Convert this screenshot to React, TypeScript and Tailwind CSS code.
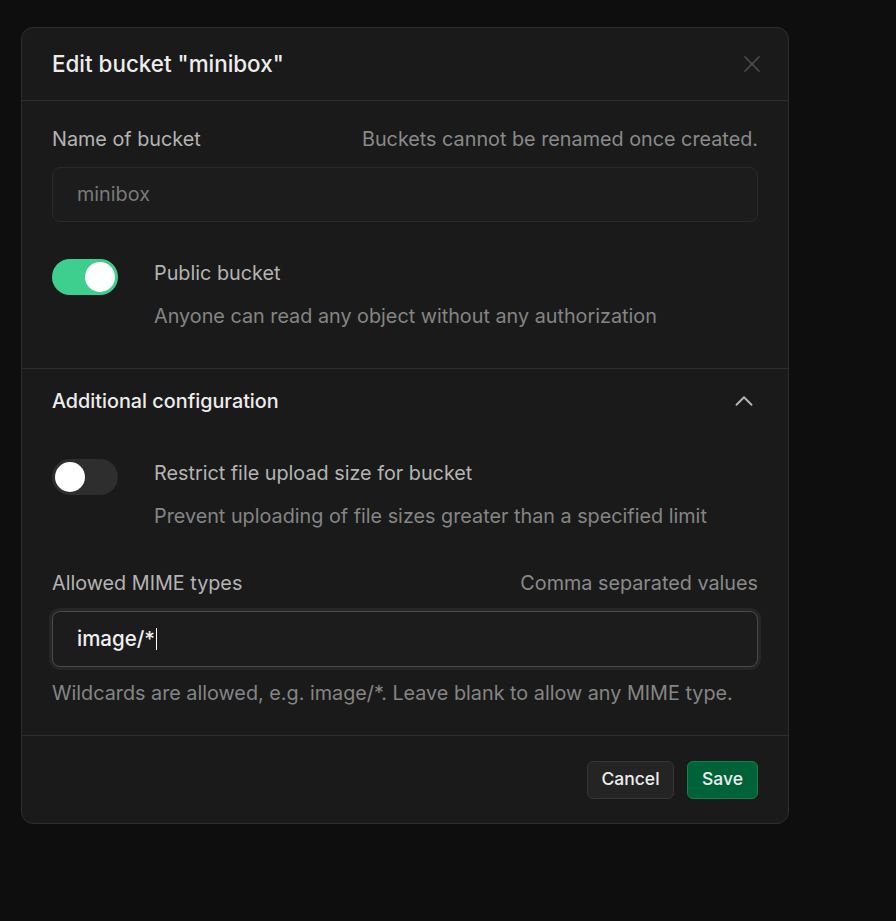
import { ChevronUp, X } from "lucide-react";

const font = { fontFamily: "Inter, 'Noto Sans', sans-serif" };

function Toggle({ on }: { on: boolean }) {
	return (
		<div
			className={`flex h-[36px] w-[66px] shrink-0 items-center rounded-full px-[3px] ${
				on ? "justify-end bg-[#3ecf8e]" : "justify-start bg-[#2e2e2e]"
			}`}
		>
			<div className="h-[30px] w-[30px] rounded-full bg-white" />
		</div>
	);
}

function ToggleRow({
	on,
	title,
	desc,
}: {
	on: boolean;
	title: string;
	desc: string;
}) {
	return (
		<div className="flex gap-[36px]">
			<Toggle on={on} />
			<div className="flex flex-col gap-[19px] pt-[2px]">
				<span className="text-[19.8px] leading-[24px] text-[#b4b4b4]">{title}</span>
				<span className="text-[19.8px] leading-[24px] text-[#858585]">{desc}</span>
			</div>
		</div>
	);
}

export default function App() {
	return (
		<div className="min-h-screen bg-[#0e0e0e] pl-[21px] pt-[27px]" style={font}>
			<div className="w-[768px] rounded-[12px] border border-[#2e2e2e] bg-[#1a1a1a]">
				{/* Header */}
				<div className="flex h-[73px] items-center justify-between border-b border-[#2e2e2e] pl-[30px] pr-[22px]">
					<h1 className="text-[22.4px] font-medium text-[#ededed]">Edit bucket "minibox"</h1>
					<X className="h-[28px] w-[28px] text-[#4d4d4d]" strokeWidth={1.5} />
				</div>

				{/* Name + public */}
				<div className="border-b border-[#2e2e2e] px-[30px] pb-[40px] pt-[26px]">
					<div className="flex items-center justify-between">
						<span className="text-[19.8px] leading-[24px] text-[#b4b4b4]">Name of bucket</span>
						<span className="text-[19.8px] leading-[24px] text-[#8a8a8a]">
							Buckets cannot be renamed once created.
						</span>
					</div>
					<div className="mt-[16px] flex h-[55px] items-center rounded-[8px] border border-[#2a2a2a] bg-[#1c1c1c] px-[24px] text-[19.8px] text-[#7a7a7a]">
						minibox
					</div>
					<div className="mt-[37px]">
						<ToggleRow
							on
							title="Public bucket"
							desc="Anyone can read any object without any authorization"
						/>
					</div>
				</div>

				{/* Additional configuration */}
				<div className="border-b border-[#2e2e2e] px-[30px] pb-[30px] pt-[20px]">
					<div className="flex h-[24px] items-center justify-between">
						<span className="text-[19.8px] font-medium leading-[24px] text-[#ededed]">
							Additional configuration
						</span>
						<ChevronUp className="-my-[3px] -mr-[1px] h-[30px] w-[30px] text-[#b4b4b4]" strokeWidth={1.5} />
					</div>
					<div className="mt-[46px]">
						<ToggleRow
							on={false}
							title="Restrict file upload size for bucket"
							desc="Prevent uploading of file sizes greater than a specified limit"
						/>
					</div>
					<div className="mt-[43px] flex items-center justify-between">
						<span className="text-[19.8px] leading-[24px] text-[#b4b4b4]">Allowed MIME types</span>
						<span className="text-[19.8px] leading-[24px] text-[#8a8a8a]">Comma separated values</span>
					</div>
					<div className="mt-[16px] flex h-[56px] items-center rounded-[8px] border border-[#4a4a4a] bg-[#1c1c1c] px-[24px] shadow-[0_0_0_3px_#262626]">
						<span className="text-[20.5px] font-medium text-[#f0f0f0]">image/*</span>
						<span className="ml-[1px] h-[22px] w-[1px] bg-white" />
					</div>
					<p className="mt-[14px] text-[19.8px] leading-[24px] text-[#858585]">
						Wildcards are allowed, e.g. image/*. Leave blank to allow any MIME type.
					</p>
				</div>

				{/* Footer */}
				<div className="flex h-[87px] items-center justify-end gap-[13px] px-[30px]">
					<button className="h-[38px] w-[87px] rounded-[6px] border border-[#363636] bg-[#242424] text-[17.5px] font-medium text-[#ededed]">
						Cancel
					</button>
					<button className="h-[38px] w-[71px] rounded-[6px] border border-[#14804a] bg-[#006239] text-[17.5px] font-medium text-[#ededed]">
						Save
					</button>
				</div>
			</div>
		</div>
	);
}
